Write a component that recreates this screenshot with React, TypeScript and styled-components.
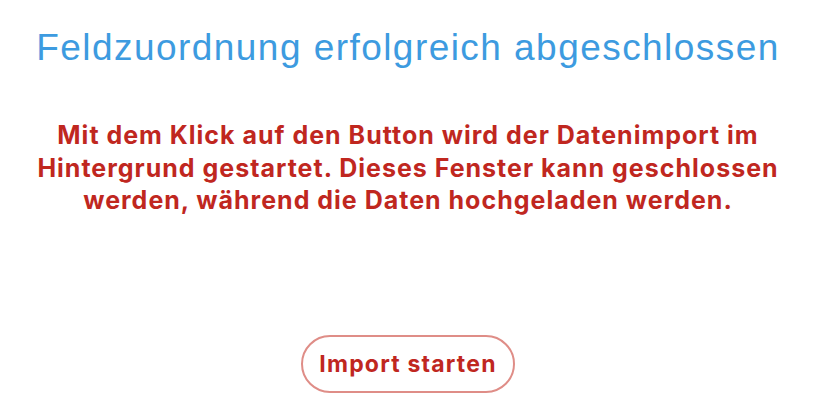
import React from "react";
import styled, { createGlobalStyle } from "styled-components";

const Global = createGlobalStyle`
  html, body { margin: 0; padding: 0; background: #ffffff; }
  body { font-family: "Liberation Sans", Arial, sans-serif; }
`;

const Page = styled.div`
  width: 816px;
  height: 414px;
  display: flex;
  flex-direction: column;
  align-items: center;
  box-sizing: border-box;
  padding-top: 26px;
`;

const Title = styled.h1`
  margin: 0;
  font-family: "Liberation Sans", Arial, sans-serif;
  font-weight: 400;
  font-size: 37px;
  letter-spacing: 1.45px;
  line-height: 44px;
  color: #3d9be0;
  text-align: center;
  white-space: nowrap;
`;

const Notice = styled.p`
  margin: 49px 0 0;
  width: 780px;
  font-family: Inter, "Liberation Sans", Arial, sans-serif;
  font-weight: 700;
  font-size: 25px;
  letter-spacing: 1px;
  line-height: 32.5px;
  color: #c0271f;
  text-align: center;
  white-space: nowrap;
`;

const Button = styled.button`
  margin-top: 118px;
  width: 214px;
  height: 58px;
  box-sizing: border-box;
  border: 2px solid #df8d87;
  border-radius: 29px;
  background: #ffffff;
  color: #c0271f;
  font-family: Inter, "Liberation Sans", Arial, sans-serif;
  font-weight: 700;
  font-size: 23px;
  letter-spacing: 1.2px;
  cursor: pointer;
`;

export default function App() {
  return (
    <>
      <Global />
      <Page>
        <Title>Feldzuordnung erfolgreich abgeschlossen</Title>
        <Notice>
          Mit dem Klick auf den Button wird der Datenimport im
          <br />
          Hintergrund gestartet. Dieses Fenster kann geschlossen
          <br />
          werden, während die Daten hochgeladen werden.
        </Notice>
        <Button>Import starten</Button>
      </Page>
    </>
  );
}
